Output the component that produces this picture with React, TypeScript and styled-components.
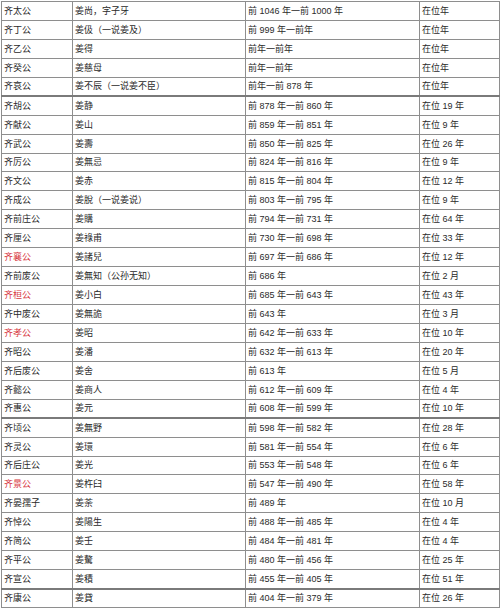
import React from "react";
import styled, { createGlobalStyle } from "styled-components";

const GlobalStyle = createGlobalStyle`
  html, body {
    margin: 0;
    padding: 0;
    background: #ffffff;
  }
`;

const Page = styled.div`
  padding: 1px 1px 0 1px;
  width: 500px;
  box-sizing: border-box;
  height: 609px;
  overflow: hidden;
`;

const Table = styled.table`
  border-collapse: collapse;
  width: 498px;
  table-layout: fixed;
  font-family: "Liberation Sans", "Noto Sans CJK SC", sans-serif;
  font-size: 9px;
  color: #2a2a2a;
`;

const Col = styled.col<{ $w: number }>`
  width: ${(p) => p.$w}px;
`;

const Row = styled.tr<{ $thick?: boolean }>`
  height: 18.94px;
  & > td {
    border-bottom: ${(p) => (p.$thick ? "2px solid #7a7a7a" : "1px solid #8e8e8e")};
  }
`;

const Cell = styled.td<{ $red?: boolean }>`
  border: 1px solid #8e8e8e;
  padding: 0 0 0 2px;
  line-height: 12px;
  white-space: nowrap;
  overflow: hidden;
  vertical-align: middle;
  color: ${(p) => (p.$red ? "#d8383f" : "#2a2a2a")};
`;

type Ruler = [string, string, string, string, boolean?, boolean?];

const columns = [71, 173, 174, 80];

const rows: Ruler[] = [
  ["齐太公", "姜尚，字子牙", "前 1046 年一前 1000 年", "在位年"],
  ["齐丁公", "姜伋（一说姜及）", "前 999 年一前年", "在位年"],
  ["齐乙公", "姜得", "前年一前年", "在位年"],
  ["齐癸公", "姜慈母", "前年一前年", "在位年"],
  ["齐哀公", "姜不辰（一说姜不臣）", "前年一前 878 年", "在位年", false, true],
  ["齐胡公", "姜静", "前 878 年一前 860 年", "在位 19 年"],
  ["齐献公", "姜山", "前 859 年一前 851 年", "在位 9 年"],
  ["齐武公", "姜壽", "前 850 年一前 825 年", "在位 26 年"],
  ["齐厉公", "姜無忌", "前 824 年一前 816 年", "在位 9 年"],
  ["齐文公", "姜赤", "前 815 年一前 804 年", "在位 12 年"],
  ["齐成公", "姜脫（一说姜说）", "前 803 年一前 795 年", "在位 9 年"],
  ["齐前庄公", "姜購", "前 794 年一前 731 年", "在位 64 年"],
  ["齐厘公", "姜祿甫", "前 730 年一前 698 年", "在位 33 年"],
  ["齐襄公", "姜諸兒", "前 697 年一前 686 年", "在位 12 年", true],
  ["齐前废公", "姜無知（公孙无知）", "前 686 年", "在位 2 月"],
  ["齐桓公", "姜小白", "前 685 年一前 643 年", "在位 43 年", true],
  ["齐中废公", "姜無詭", "前 643 年", "在位 3 月"],
  ["齐孝公", "姜昭", "前 642 年一前 633 年", "在位 10 年", true],
  ["齐昭公", "姜潘", "前 632 年一前 613 年", "在位 20 年"],
  ["齐后废公", "姜舍", "前 613 年", "在位 5 月"],
  ["齐懿公", "姜商人", "前 612 年一前 609 年", "在位 4 年"],
  ["齐惠公", "姜元", "前 608 年一前 599 年", "在位 10 年", false, true],
  ["齐顷公", "姜無野", "前 598 年一前 582 年", "在位 28 年"],
  ["齐灵公", "姜環", "前 581 年一前 554 年", "在位 6 年"],
  ["齐后庄公", "姜光", "前 553 年一前 548 年", "在位 6 年"],
  ["齐景公", "姜杵臼", "前 547 年一前 490 年", "在位 58 年", true],
  ["齐晏孺子", "姜荼", "前 489 年", "在位 10 月"],
  ["齐悼公", "姜陽生", "前 488 年一前 485 年", "在位 4 年"],
  ["齐简公", "姜壬", "前 484 年一前 481 年", "在位 4 年"],
  ["齐平公", "姜驁", "前 480 年一前 456 年", "在位 25 年"],
  ["齐宣公", "姜積", "前 455 年一前 405 年", "在位 51 年", false, true],
  ["齐康公", "姜貸", "前 404 年一前 379 年", "在位 26 年"],
];

export default function App() {
  return (
    <>
      <GlobalStyle />
      <Page>
        <Table>
          <colgroup>
            {columns.map((w, i) => (
              <Col key={i} $w={w} />
            ))}
          </colgroup>
          <tbody>
            {rows.map(([title, name, years, reign, red, thick], i) => (
              <Row key={i} $thick={thick}>
                <Cell $red={red}>{title}</Cell>
                <Cell>{name}</Cell>
                <Cell>{years}</Cell>
                <Cell>{reign}</Cell>
              </Row>
            ))}
          </tbody>
        </Table>
      </Page>
    </>
  );
}
